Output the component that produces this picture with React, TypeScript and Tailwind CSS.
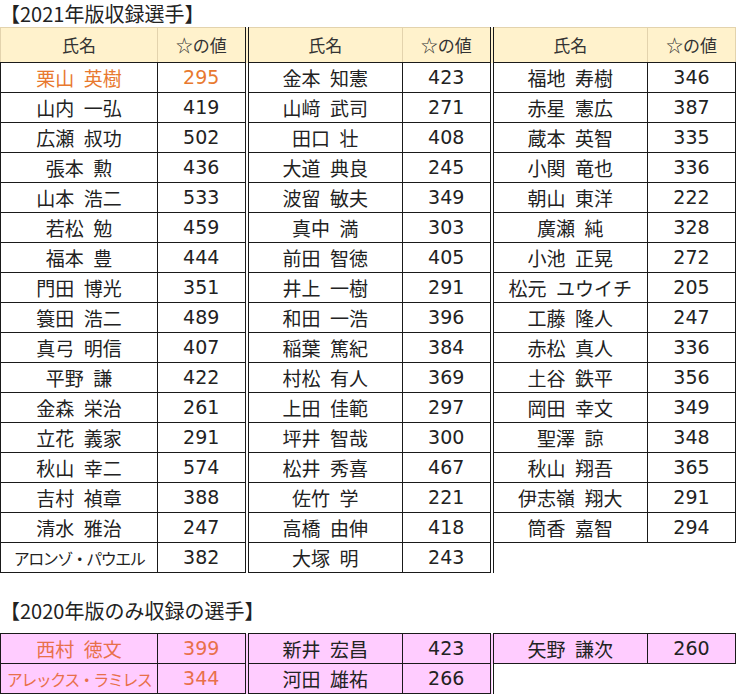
import React from 'react';

type Player = { name: string; value: number; highlight?: boolean; small?: boolean } | null;

const main: Player[][] = [
  [{ name: '栗山 英樹', value: 295, highlight: true }, { name: '金本 知憲', value: 423 }, { name: '福地 寿樹', value: 346 }],
  [{ name: '山内 一弘', value: 419 }, { name: '山﨑 武司', value: 271 }, { name: '赤星 憲広', value: 387 }],
  [{ name: '広瀬 叔功', value: 502 }, { name: '田口 壮', value: 408 }, { name: '蔵本 英智', value: 335 }],
  [{ name: '張本 勲', value: 436 }, { name: '大道 典良', value: 245 }, { name: '小関 竜也', value: 336 }],
  [{ name: '山本 浩二', value: 533 }, { name: '波留 敏夫', value: 349 }, { name: '朝山 東洋', value: 222 }],
  [{ name: '若松 勉', value: 459 }, { name: '真中 満', value: 303 }, { name: '廣瀬 純', value: 328 }],
  [{ name: '福本 豊', value: 444 }, { name: '前田 智徳', value: 405 }, { name: '小池 正晃', value: 272 }],
  [{ name: '門田 博光', value: 351 }, { name: '井上 一樹', value: 291 }, { name: '松元 ユウイチ', value: 205 }],
  [{ name: '簑田 浩二', value: 489 }, { name: '和田 一浩', value: 396 }, { name: '工藤 隆人', value: 247 }],
  [{ name: '真弓 明信', value: 407 }, { name: '稲葉 篤紀', value: 384 }, { name: '赤松 真人', value: 336 }],
  [{ name: '平野 謙', value: 422 }, { name: '村松 有人', value: 369 }, { name: '土谷 鉄平', value: 356 }],
  [{ name: '金森 栄治', value: 261 }, { name: '上田 佳範', value: 297 }, { name: '岡田 幸文', value: 349 }],
  [{ name: '立花 義家', value: 291 }, { name: '坪井 智哉', value: 300 }, { name: '聖澤 諒', value: 348 }],
  [{ name: '秋山 幸二', value: 574 }, { name: '松井 秀喜', value: 467 }, { name: '秋山 翔吾', value: 365 }],
  [{ name: '吉村 禎章', value: 388 }, { name: '佐竹 学', value: 221 }, { name: '伊志嶺 翔大', value: 291 }],
  [{ name: '清水 雅治', value: 247 }, { name: '高橋 由伸', value: 418 }, { name: '筒香 嘉智', value: 294 }],
  [{ name: 'アロンゾ・パウエル', value: 382, small: true }, { name: '大塚 明', value: 243 }, null],
];

const only2020: Player[][] = [
  [{ name: '西村 徳文', value: 399, highlight: true }, { name: '新井 宏昌', value: 423 }, { name: '矢野 謙次', value: 260 }],
  [{ name: 'アレックス・ラミレス', value: 344, highlight: true, small: true }, { name: '河田 雄祐', value: 266 }, null],
];

const showName = (n: string) => n.replace(' ', '\u2002');

const Cells = ({ p, last, pink, hlColor }: { p: Player; last: boolean; pink?: boolean; hlColor: string }) => {
  if (!p) {
    return (
      <>
        <td />
        <td />
      </>
    );
  }
  const color = p.highlight ? hlColor : 'text-[#222]';
  const bg = pink ? 'bg-[#ffccff]' : 'bg-white';
  return (
    <>
      <td
        className={`${bg} ${color} border border-[#1a1a1a] text-center whitespace-nowrap leading-none ${
          p.small ? 'text-[16px] tracking-[-1.5px]' : 'text-[19px]'
        }`}
      >
        {showName(p.name)}
      </td>
      <td
        className={`${bg} ${color} border border-[#1a1a1a] text-center font-['DejaVu_Sans',sans-serif] text-[19px] leading-none ${
          last ? '' : 'border-r-[4px] [border-right-style:double]'
        }`}
      >
        {p.value}
      </td>
    </>
  );
};

const Cols = () => (
  <colgroup>
    <col className="w-[157px]" />
    <col className="w-[89px]" />
    <col className="w-[156px]" />
    <col className="w-[89px]" />
    <col className="w-[156px]" />
    <col className="w-[88px]" />
  </colgroup>
);

export default function App() {
  return (
    <div className="w-[736px] h-[694px] bg-white overflow-hidden font-['Noto_Sans_CJK_JP',sans-serif] text-[#222]">
      <div className="h-[27px] pt-[2px] text-[20px] leading-[24px]">【2021年版収録選手】</div>
      <table className="table-fixed border-collapse w-[735px]">
        <Cols />
        <thead>
          <tr className="h-[35px] bg-[#fff2cc] text-[17px] text-[#333]">
            {[0, 1, 2].map((g) => (
              <React.Fragment key={g}>
                <th className="font-normal border border-[#e3d3ad] border-b-[#1a1a1a]">氏名</th>
                <th
                  className={`font-normal border border-[#e3d3ad] border-b-[#1a1a1a] ${
                    g < 2 ? 'border-r-[4px] [border-right-style:double] border-r-[#1a1a1a]' : ''
                  }`}
                >
                  ☆の値
                </th>
              </React.Fragment>
            ))}
          </tr>
        </thead>
        <tbody>
          {main.map((row, i) => (
            <tr key={i} className="h-[30px]">
              {row.map((p, g) => (
                <Cells key={g} p={p} last={g === 2} hlColor="text-[#e8792f]" />
              ))}
            </tr>
          ))}
        </tbody>
      </table>

      <div className="mt-[25px] h-[26px] mb-[9px] text-[20px] leading-[26px]">【2020年版のみ収録の選手】</div>
      <table className="table-fixed border-collapse w-[735px]">
        <Cols />
        <tbody>
          {only2020.map((row, i) => (
            <tr key={i} className="h-[30px]">
              {row.map((p, g) => (
                <Cells key={g} p={p} last={g === 2} pink hlColor="text-[#e8704a]" />
              ))}
            </tr>
          ))}
        </tbody>
      </table>
    </div>
  );
}
